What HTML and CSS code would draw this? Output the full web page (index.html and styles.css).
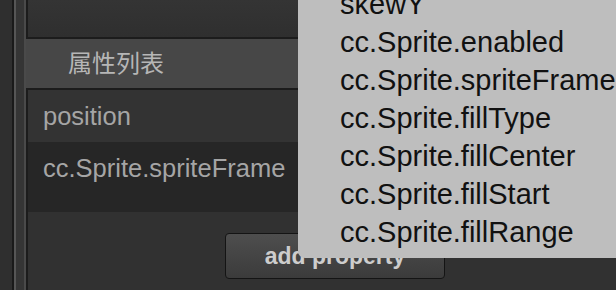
FILE: index.html
```html
<!DOCTYPE html>
<html lang="zh">
<head>
    <meta charset="UTF-8">
    <meta name="viewport" content="width=device-width, initial-scale=1.0">
    <title>属性列表</title>
    <link rel="stylesheet" href="styles.css">
</head>
<body>
    <div class="editor">
        <div class="rail"></div>

        <div class="panel">
            <div class="top-box"></div>

            <div class="section-header">属性列表</div>

            <div class="prop-list">
                <div class="prop-row hover">position</div>
                <div class="prop-row">cc.Sprite.spriteFrame</div>
            </div>

            <div class="footer">
                <button type="button" class="add-btn">add property</button>
            </div>
        </div>

        <ul class="menu">
            <li>skewY</li>
            <li>cc.Sprite.enabled</li>
            <li>cc.Sprite.spriteFrame</li>
            <li>cc.Sprite.fillType</li>
            <li>cc.Sprite.fillCenter</li>
            <li>cc.Sprite.fillStart</li>
            <li>cc.Sprite.fillRange</li>
        </ul>
    </div>
</body>
</html>
```

FILE: styles.css
```css
body {
    margin: 0;
    background-color: #2e2e2e;
    font-family: "Liberation Sans", "Noto Sans CJK SC", sans-serif;
    overflow: hidden;
}

.editor {
    position: relative;
    display: flex;
    width: 616px;
    height: 290px;
    overflow: hidden;
}

.rail {
    width: 26px;
    flex-shrink: 0;
    background: linear-gradient(to right,
        #2f2f2f 0 12px,
        #1a1a1a 12px 14px,
        #565656 14px 16px,
        #353535 16px 24px,
        #4a4a4a 24px 26px);
}

.panel {
    flex: 1;
    display: flex;
    flex-direction: column;
}

.top-box {
    height: 37px;
    background: linear-gradient(#343434, #2f2f2f);
    border-left: 2px solid #1c1c1c;
    border-bottom: 2px solid #1c1c1c;
}

.section-header {
    height: 45px;
    line-height: 45px;
    padding: 0 0 4px 42px;
    background-color: #474747;
    color: #b6b6b6;
    font-family: "Noto Sans CJK SC", sans-serif;
    font-size: 24px;
}

.prop-list {
    border-top: 2px solid #1c1c1c;
    border-left: 2px solid #1c1c1c;
    padding-bottom: 18px;
    background-color: #262626;
}

.prop-row {
    height: 52px;
    line-height: 52px;
    padding-left: 15px;
    color: #a5a5a5;
    font-size: 25.5px;
}

.prop-row.hover {
    background-color: #333333;
}

.footer {
    flex: 1;
    border-left: 2px solid #1c1c1c;
    background-color: #313131;
    padding: 21px 0 0 197px;
}

.add-btn {
    width: 220px;
    height: 46px;
    border: 1px solid #141414;
    border-radius: 4px;
    background: linear-gradient(#4e4e4e, #3b3b3b);
    color: #cdcdcd;
    font-family: "Liberation Sans", sans-serif;
    font-weight: bold;
    font-size: 23px;
    padding: 0;
}

.menu {
    position: absolute;
    left: 298px;
    top: -15px;
    width: 360px;
    margin: 0;
    padding: 0 0 7px 42px;
    list-style: none;
    background-color: #bebebe;
    border-bottom-left-radius: 7px;
    color: #111111;
    font-size: 29px;
    line-height: 38px;
}
```
